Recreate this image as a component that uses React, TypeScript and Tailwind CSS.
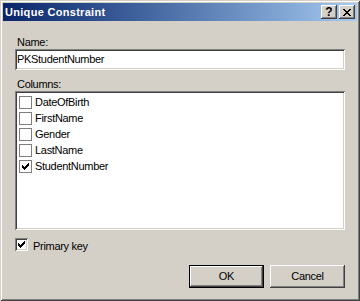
const raised =
  "shadow-[inset_-1px_-1px_#404040,inset_1px_1px_#ffffff,inset_-2px_-2px_#808080,inset_2px_2px_#d4d0c8]";
const sunken =
  "shadow-[inset_1px_1px_#808080,inset_-1px_-1px_#ffffff,inset_2px_2px_#404040,inset_-2px_-2px_#d4d0c8]";

const Check = () => (
  <svg width="7" height="7" viewBox="0 0 7 7" shapeRendering="crispEdges">
    <rect x="0" y="2" width="1" height="3" fill="#000" />
    <rect x="1" y="3" width="1" height="3" fill="#000" />
    <rect x="2" y="4" width="1" height="3" fill="#000" />
    <rect x="3" y="3" width="1" height="3" fill="#000" />
    <rect x="4" y="2" width="1" height="3" fill="#000" />
    <rect x="5" y="1" width="1" height="3" fill="#000" />
    <rect x="6" y="0" width="1" height="3" fill="#000" />
  </svg>
);

const CloseGlyph = () => (
  <svg width="8" height="7" viewBox="0 0 8 7" shapeRendering="crispEdges">
    <rect x="0" y="0" width="2" height="1" fill="#000" />
    <rect x="6" y="0" width="2" height="1" fill="#000" />
    <rect x="1" y="1" width="2" height="1" fill="#000" />
    <rect x="5" y="1" width="2" height="1" fill="#000" />
    <rect x="2" y="2" width="4" height="1" fill="#000" />
    <rect x="3" y="3" width="2" height="1" fill="#000" />
    <rect x="2" y="4" width="4" height="1" fill="#000" />
    <rect x="1" y="5" width="2" height="1" fill="#000" />
    <rect x="5" y="5" width="2" height="1" fill="#000" />
    <rect x="0" y="6" width="2" height="1" fill="#000" />
    <rect x="6" y="6" width="2" height="1" fill="#000" />
  </svg>
);

const columns = [
  { name: "DateOfBirth", checked: false },
  { name: "FirstName", checked: false },
  { name: "Gender", checked: false },
  { name: "LastName", checked: false },
  { name: "StudentNumber", checked: true },
];

const App = () => {
  return (
    <div
      className={`w-[360px] h-[301px] bg-[#d4d0c8] p-[3px] flex flex-col font-['Liberation_Sans',Arial,sans-serif] text-[11px] text-black tracking-[-0.3px] shadow-[inset_1px_1px_#d4d0c8,inset_-1px_-1px_#404040,inset_2px_2px_#ffffff,inset_-2px_-2px_#808080]`}
    >
      {/* title bar */}
      <div className="h-[18px] flex items-center justify-between pl-[2px] pr-[2px] bg-gradient-to-r from-[#0a246a] to-[#a6caf0]">
        <span className="text-white font-bold leading-[18px] tracking-[0.3px]">Unique Constraint</span>
        <div className="flex gap-[2px]">
          <div className={`w-[16px] h-[14px] bg-[#d4d0c8] flex items-center justify-center ${raised}`}>
            <span className="font-bold text-[12px] leading-none tracking-normal -mt-[1px]">?</span>
          </div>
          <div className={`w-[16px] h-[14px] bg-[#d4d0c8] flex items-center justify-center ${raised}`}>
            <CloseGlyph />
          </div>
        </div>
      </div>

      <div className="flex flex-col px-[12px]">
        <div className="mt-[15px] leading-[13px] pl-[2px]">Name:</div>
        <div className={`h-[21px] bg-white flex items-center px-[2px] ${sunken}`}>
          <span className="leading-[13px]">PKStudentNumber</span>
        </div>

        <div className="mt-[8px] leading-[13px] pl-[2px]">Columns:</div>
        <div className={`h-[139px] bg-white p-[2px] ${sunken}`}>
          <div className="flex flex-col pt-[1px]">
            {columns.map((c) => (
              <div key={c.name} className="h-[16px] flex items-start">
                <div className="mt-[2px] ml-[2px] w-[13px] h-[13px] border border-[#808080] bg-white flex items-center justify-center">
                  {c.checked && <Check />}
                </div>
                <span className="ml-[3px] leading-[16px]">{c.name}</span>
              </div>
            ))}
          </div>
        </div>

        <div className="mt-[8px] flex items-start">
          <div className={`w-[13px] h-[13px] bg-white flex items-center justify-center ${sunken}`}>
            <Check />
          </div>
          <span className="ml-[5px] leading-[13px] mt-[2px]">Primary key</span>
        </div>

        <div className="mt-[12px] flex justify-end gap-[6px]">
          <button className={`w-[75px] h-[23px] bg-[#d4d0c8] border border-black flex items-center justify-center ${raised}`}>
            OK
          </button>
          <button className={`w-[75px] h-[23px] bg-[#d4d0c8] flex items-center justify-center ${raised}`}>
            Cancel
          </button>
        </div>
      </div>
    </div>
  );
};

export default App;
